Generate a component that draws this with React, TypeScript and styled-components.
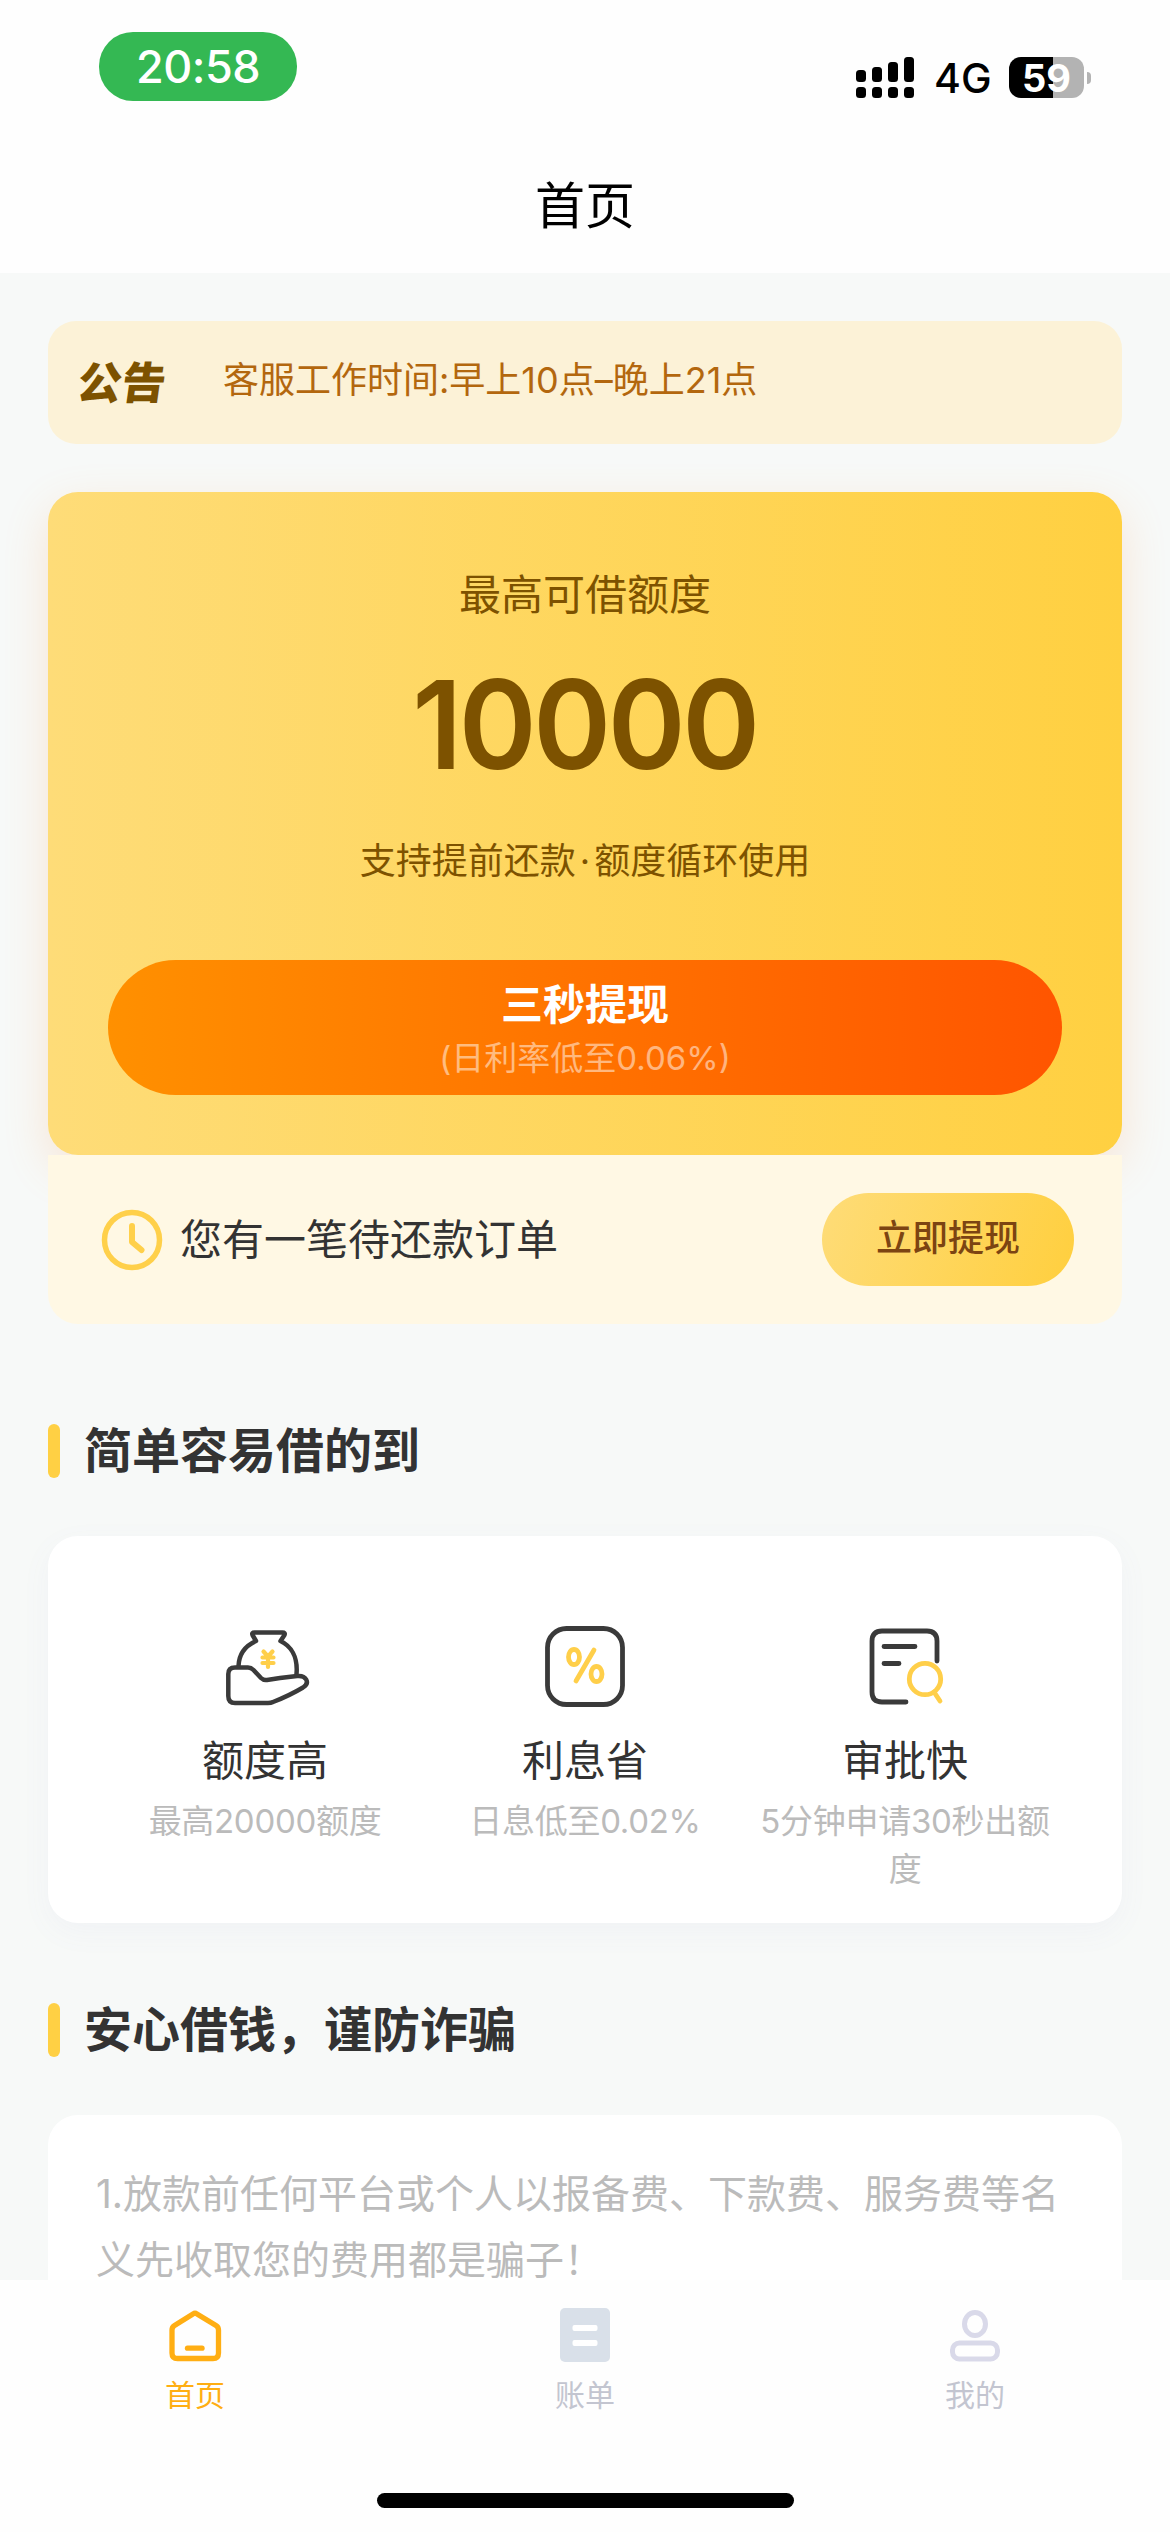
import React from "react";
import styled, { createGlobalStyle } from "styled-components";

const Global = createGlobalStyle`
  * { box-sizing: border-box; }
  html, body { margin: 0; padding: 0; }
  body {
    background: #f7f9f8;
    font-family: Inter, "Noto Sans CJK SC", sans-serif;
    color: #333;
  }
`;

const Screen = styled.div`
  width: 1170px;
  height: 2532px;
  overflow: hidden;
  display: flex;
  flex-direction: column;
  background: #f7f9f8;
`;

const Header = styled.header`
  height: 273px;
  flex: none;
  background: #fefefe;
`;

const StatusBar = styled.div`
  height: 141px;
  display: flex;
  justify-content: space-between;
  align-items: flex-start;
  padding: 32px 79px 0 99px;
`;

const TimePill = styled.div`
  width: 198px;
  height: 69px;
  border-radius: 34px;
  background: #34b853;
  color: #fff;
  font-size: 45px;
  font-weight: 500;
  line-height: 70px;
  letter-spacing: -0.5px;
  text-align: center;
`;

const StatusRight = styled.div`
  display: flex;
  align-items: center;
  margin-top: 25px;
  height: 41px;
`;

const Network = styled.span`
  width: 57px;
  margin-left: 19px;
  font-size: 41px;
  font-weight: 450;
  line-height: 44px;
  color: #000;
`;

const Battery = styled.div`
  width: 75px;
  height: 41px;
  margin-left: 18px;
  border-radius: 12px;
  background: linear-gradient(90deg, #000 58.6%, #b3b3b3 58.6%);
  color: #fff;
  font-size: 38px;
  font-weight: 700;
  line-height: 42px;
  text-align: center;
`;

const BatteryTip = styled.div`
  width: 4px;
  height: 12px;
  margin-left: 3px;
  border-radius: 0 5px 5px 0;
  background: #b3b3b3;
`;

const PageTitle = styled.h1`
  margin: 0;
  font-size: 50px;
  font-weight: 400;
  line-height: 130px;
  text-align: center;
  color: #000;
`;

const Content = styled.main`
  flex: 1;
  min-height: 0;
  overflow: hidden;
  padding: 48px 48px 0;
`;

const Notice = styled.div`
  height: 123px;
  display: flex;
  align-items: center;
  padding-left: 30px;
  border-radius: 28px;
  background: #fcf2d7;
`;

const NoticeTag = styled.span`
  width: 145px;
  font-size: 44px;
  font-weight: 900;
  line-height: 50px;
  color: #7d5200;
  transform: skewX(-8deg);
`;

const NoticeText = styled.span`
  padding-bottom: 5px;
  font-size: 36px;
  line-height: 50px;
  color: #b3670e;
`;

const LoanCard = styled.section`
  height: 663px;
  margin-top: 48px;
  padding: 73px 60px 0;
  display: flex;
  flex-direction: column;
  align-items: center;
  border-radius: 30px;
  background: linear-gradient(90deg, #fedc78, #ffd041);
  box-shadow: 0 15px 45px rgba(255, 150, 70, 0.2);
  color: #7d5200;
`;

const LoanLabel = styled.div`
  font-size: 42px;
  line-height: 60px;
`;

const LoanAmount = styled.div`
  margin-top: 25px;
  font-size: 123px;
  font-weight: 600;
  line-height: 150px;
  letter-spacing: -3.5px;
  transform: scaleX(0.96);
`;

const LoanNote = styled.div`
  margin-top: 36px;
  font-size: 36px;
  line-height: 50px;
`;

const Dot = styled.span`
  padding: 0 4px;
`;

const WithdrawButton = styled.button`
  width: 954px;
  height: 135px;
  margin-top: 74px;
  padding: 7px 0 0;
  border: 0;
  border-radius: 68px;
  background: linear-gradient(90deg, #ff9000, #ff5500);
  font-family: inherit;
  color: #fff;
`;

const WithdrawTitle = styled.div`
  font-size: 42px;
  font-weight: 700;
  line-height: 54px;
`;

const WithdrawRate = styled.div`
  font-size: 33px;
  line-height: 52px;
  color: rgba(255, 255, 255, 0.5);
`;

const OrderStrip = styled.div`
  height: 169px;
  display: flex;
  align-items: center;
  padding: 0 48px 0 53px;
  border-radius: 0 0 30px 30px;
  background: #fff8e4;
  position: relative;
`;

const OrderText = styled.span`
  flex: 1;
  margin-left: 17px;
  font-size: 42px;
  line-height: 60px;
`;

const OrderButton = styled.button`
  width: 252px;
  height: 93px;
  padding: 0 0 9px;
  border: 0;
  border-radius: 47px;
  background: linear-gradient(110deg, #fedc78, #ffcf3e);
  color: #7c4412;
  font-family: inherit;
  font-size: 36px;
  font-weight: 500;
`;

const SectionTitle = styled.h2<{ $gap: number }>`
  display: flex;
  align-items: center;
  height: 54px;
  margin: ${(p) => p.$gap}px 0 58px;
  font-size: 48px;
  font-weight: 700;
  line-height: 54px;

  &::before {
    content: "";
    width: 12px;
    height: 54px;
    margin-right: 24px;
    border-radius: 6px;
    background: #ffd044;
  }
`;

const Features = styled.div`
  height: 387px;
  display: grid;
  grid-template-columns: repeat(3, 320px);
  justify-content: center;
  padding-top: 84px;
  border-radius: 30px;
  background: #fff;
  box-shadow: 0 9px 30px rgba(120, 120, 200, 0.05);
`;

const Feature = styled.div`
  display: flex;
  flex-direction: column;
  align-items: center;
  padding: 0 12px;
  text-align: center;
`;

const FeatureName = styled.div`
  margin-top: 21px;
  font-size: 42px;
  line-height: 60px;
`;

const FeatureNote = styled.div`
  margin-top: 6px;
  font-size: 33px;
  line-height: 48px;
  letter-spacing: -0.3px;
  color: #bbb;
`;

const Warning = styled.div`
  height: 165px;
  padding: 46px 48px 0;
  border-radius: 30px 30px 0 0;
  background: #fff;
  font-size: 39px;
  line-height: 66px;
  color: #bbb;
`;

const TabBar = styled.nav`
  flex: none;
  height: 252px;
  background: #fefefe;
  display: flex;
  flex-direction: column;
  align-items: center;
  justify-content: space-between;
  padding: 25px 0 24px;
`;

const Tabs = styled.div`
  width: 100%;
  display: grid;
  grid-template-columns: repeat(3, 1fr);
`;

const Tab = styled.div<{ $active?: boolean }>`
  display: flex;
  flex-direction: column;
  align-items: center;
  font-size: 30px;
  line-height: 44px;
  color: ${(p) => (p.$active ? "#ffae13" : "#c3c5d0")};

  svg { margin-bottom: 8px; }
`;

const HomeIndicator = styled.div`
  width: 417px;
  height: 15px;
  border-radius: 8px;
  background: #000;
`;

const Signal = () => (
  <svg width="59" height="41" viewBox="0 0 59 41">
    {[13, 10, 5, 0].map((top, i) => (
      <g key={i}>
        <rect x={i * 16} y={top} width="10" height={25 - top} rx="3.500" />
        <rect x={i * 16} y="30" width="10" height="11" rx="3.500" />
      </g>
    ))}
  </svg>
);

const ClockIcon = () => (
  <svg width="62" height="62" viewBox="0 0 62 62" fill="none" stroke="#ffd04a" strokeLinecap="round" strokeLinejoin="round">
    <circle cx="31" cy="31" r="27.500" strokeWidth="5.500" />
    <path d="M31 17V33L40.500 41" strokeWidth="6" />
  </svg>
);

const MoneyBagIcon = () => (
  <svg width="90" height="90" viewBox="0 0 90 90" fill="none" stroke="#3a3a3a" strokeWidth="4.5" strokeLinecap="round" strokeLinejoin="round">
    <path d="M18.500 46C19 33 27 25 36 21L32.500 15Q31.500 12.500 34.500 12.500H62.500Q65.500 12.500 64.500 15L60.500 21C71 26 78 37 76.500 54" />
    <path d="M8.300 54Q8.300 47.500 15 47.500H28Q31 47.500 33.500 50L41 58Q43.500 60.500 47 60L60 58L77 56C86 55 90.500 62.500 83 67.500C73 73.500 62 78.500 53 82Q51 83 48 83H15Q8.300 83 8.300 76Z" />
    <path d="M43.500 31.500L48 36.500L52.500 31.500M42.500 37.500H53.500M42.500 43H53.500M48 37V47" stroke="#ffcf4a" strokeWidth="4.200" />
  </svg>
);

const PercentIcon = () => (
  <svg width="90" height="90" viewBox="0 0 90 90" fill="none" strokeLinecap="round">
    <rect x="7.500" y="8.500" width="75" height="76" rx="19" stroke="#3a3a3a" strokeWidth="4.800" />
    <g stroke="#ffcf4a" strokeWidth="4.800">
      <ellipse cx="34" cy="37" rx="5.500" ry="7.500" />
      <ellipse cx="56.500" cy="54" rx="5.500" ry="7.500" />
      <path d="M54 30L36 61" />
    </g>
  </svg>
);

const ReviewIcon = () => (
  <svg width="90" height="90" viewBox="0 0 90 90" fill="none" stroke="#3a3a3a" strokeWidth="4.8" strokeLinecap="round">
    <path d="M77 41V21Q77 11 67 11H22Q12 11 12 21V72Q12 82 22 82H46" />
    <path d="M24 26.500H55M24 43.500H39" />
    <g stroke="#ffcf4a">
      <circle cx="65" cy="59" r="15.700" />
      <path d="M74 72L80 81" />
    </g>
  </svg>
);

const HomeIcon = () => (
  <svg width="60" height="60" viewBox="0 0 60 60" fill="none" stroke="#ffae13" strokeWidth="5.300" strokeLinejoin="round" strokeLinecap="round">
    <path d="M28 9Q30 7.500 32 9L51 20.500Q53.500 22 53.500 25V48Q53.500 53.500 48 53.500H12.500Q7 53.500 7 48V25Q7 22 9.500 20.500Z" />
    <path d="M22.500 43.200H37" />
  </svg>
);

const BillIcon = () => (
  <svg width="60" height="60" viewBox="0 0 60 60">
    <rect x="5" y="3" width="50" height="54" rx="5" fill="#d9e0e9" />
    <rect x="17.500" y="20" width="25" height="6" rx="2" fill="#fff" />
    <rect x="17.500" y="35" width="25" height="6" rx="2" fill="#fff" />
  </svg>
);

const UserIcon = () => (
  <svg width="60" height="60" viewBox="0 0 60 60" fill="none" stroke="#d9d9e9" strokeWidth="5">
    <ellipse cx="30" cy="19" rx="10.500" ry="11.500" />
    <rect x="7.500" y="38" width="45" height="16" rx="7" />
  </svg>
);

const features = [
  { icon: <MoneyBagIcon />, name: "额度高", note: "最高20000额度" },
  { icon: <PercentIcon />, name: "利息省", note: "日息低至0.02%" },
  { icon: <ReviewIcon />, name: "审批快", note: "5分钟申请30秒出额度" },
];

const tabs = [
  { icon: <HomeIcon />, label: "首页", active: true },
  { icon: <BillIcon />, label: "账单" },
  { icon: <UserIcon />, label: "我的" },
];

export default function App() {
  return (
    <Screen lang="zh-CN">
      <Global />
      <Header>
        <StatusBar>
          <TimePill>20:58</TimePill>
          <StatusRight>
            <Signal />
            <Network>4G</Network>
            <Battery>59</Battery>
            <BatteryTip />
          </StatusRight>
        </StatusBar>
        <PageTitle>首页</PageTitle>
      </Header>
      <Content>
        <Notice>
          <NoticeTag>公告</NoticeTag>
          <NoticeText>客服工作时间:早上10点–晚上21点</NoticeText>
        </Notice>
        <LoanCard>
          <LoanLabel>最高可借额度</LoanLabel>
          <LoanAmount>10000</LoanAmount>
          <LoanNote>
            支持提前还款<Dot>·</Dot>额度循环使用
          </LoanNote>
          <WithdrawButton>
            <WithdrawTitle>三秒提现</WithdrawTitle>
            <WithdrawRate>(日利率低至0.06%)</WithdrawRate>
          </WithdrawButton>
        </LoanCard>
        <OrderStrip>
          <ClockIcon />
          <OrderText>您有一笔待还款订单</OrderText>
          <OrderButton>立即提现</OrderButton>
        </OrderStrip>
        <SectionTitle $gap={100}>简单容易借的到</SectionTitle>
        <Features>
          {features.map((f) => (
            <Feature key={f.name}>
              {f.icon}
              <FeatureName>{f.name}</FeatureName>
              <FeatureNote>{f.note}</FeatureNote>
            </Feature>
          ))}
        </Features>
        <SectionTitle $gap={80}>安心借钱，谨防诈骗</SectionTitle>
        <Warning>1.放款前任何平台或个人以报备费、下款费、服务费等名义先收取您的费用都是骗子！</Warning>
      </Content>
      <TabBar>
        <Tabs>
          {tabs.map((t) => (
            <Tab key={t.label} $active={t.active}>
              {t.icon}
              {t.label}
            </Tab>
          ))}
        </Tabs>
        <HomeIndicator />
      </TabBar>
    </Screen>
  );
}
